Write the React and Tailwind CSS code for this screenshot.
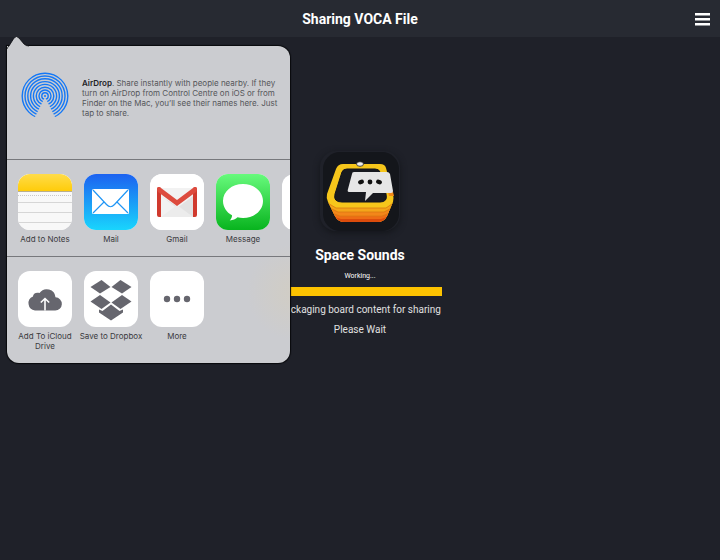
function AirDropIcon() {
  return (
    <svg className="h-12 w-12 shrink-0" viewBox="0 0 48 48" fill="none" aria-hidden="true">
      <clipPath id="airdrop-wedge">
        <path d="M0 0H48V48H35L24 26L13 48H0Z" />
      </clipPath>
      <g stroke="#1478f6" strokeWidth="1.4" clipPath="url(#airdrop-wedge)">
        {[3.2, 6, 8.8, 11.6, 14.4, 17.2, 20, 22.8].map((radius) => (
          <circle key={radius} cx="24" cy="25" r={radius} />
        ))}
      </g>
      <circle cx="24" cy="25" r="1" fill="#1478f6" />
    </svg>
  );
}

function NotesIcon() {
  return (
    <svg className="h-full w-full" viewBox="0 0 54 56" aria-hidden="true">
      <defs>
        <linearGradient id="notes-top" x2="0" y2="1">
          <stop stopColor="#ffdc4a" />
          <stop offset="1" stopColor="#ffcc0a" />
        </linearGradient>
      </defs>
      <rect width="54" height="56" fill="#f8f8f8" />
      <rect width="54" height="17" fill="url(#notes-top)" />
      <path d="M0 17.5H54" stroke="#b9ae8c" />
      <path d="M0 21.5H54" stroke="#c8c8c8" strokeDasharray="1 1" />
      <path d="M0 28.5H54M0 38.5H54M0 48.5H54" stroke="#d6d6d6" />
    </svg>
  );
}

function MailIcon() {
  return (
    <svg className="h-full w-full" viewBox="0 0 54 56" aria-hidden="true">
      <defs>
        <linearGradient id="mail-sky" x2="0" y2="1">
          <stop stopColor="#1d62f0" />
          <stop offset="1" stopColor="#19d5fd" />
        </linearGradient>
      </defs>
      <rect width="54" height="56" fill="url(#mail-sky)" />
      <rect x="8" y="15" width="37" height="25" rx="1.5" fill="#fff" />
      <g fill="none" stroke="#2196f5" strokeWidth="1.2">
        <path d="M9 16L22.500 30.500Q26.500 35 30.500 30.500L44 16" />
        <path d="M9 39L20 28M44 39L33 28" />
      </g>
    </svg>
  );
}

function GmailIcon() {
  return (
    <svg className="h-full w-full" viewBox="0 0 54 56" aria-hidden="true">
      <rect width="54" height="56" fill="#fff" />
      <path d="M8 14H46V43H8Z" fill="#f2f2f2" />
      <path d="M11 22L27 34L43 22V43Z" fill="#e2e2e2" />
      <path d="M11 43L27 31L43 43Z" fill="#ececec" />
      <path d="M7 15Q7 13 9 13L11 14V43H9Q7 43 7 41ZM47 15Q47 13 45 13L43 14V43H45Q47 43 47 41Z" fill="#d03a2e" />
      <path d="M7 15Q7 13 9 13Q10 13 11 14L27 26L43 14Q44 13 45 13Q47 13 47 15Q47 17 46 18L27 32L8 18Q7 17 7 15Z" fill="#dd4b3e" />
    </svg>
  );
}

function MessageIcon() {
  return (
    <svg className="h-full w-full" viewBox="0 0 54 56" aria-hidden="true">
      <defs>
        <linearGradient id="message-green" x2="0" y2="1">
          <stop stopColor="#67fa7c" />
          <stop offset="1" stopColor="#08b41e" />
        </linearGradient>
      </defs>
      <rect width="54" height="56" fill="url(#message-green)" />
      <path
        d="M27 10C15.800 10 7 17.400 7 27C7 33 10.500 38.300 16 41.300C16.200 43.500 15 45 13.800 46.500C17 46.300 19.700 45 21.500 43.300C23.200 43.700 25 44 27 44C38.200 44 47 36.600 47 27C47 17.400 38.200 10 27 10Z"
        fill="#fff"
      />
    </svg>
  );
}

function CloudIcon() {
  return (
    <svg className="h-full w-full" viewBox="0 0 54 56" aria-hidden="true">
      <path
        d="M17 39.500A7.300 7.300 0 0 1 15 25.500C15 22.500 18 21 21.500 22A8.800 8.800 0 0 1 37.500 26.300A6.600 6.600 0 0 1 37 39.500Z"
        fill="#66666e"
      />
      <path d="M27 39.500V28M22.800 31.500L27 27.500L31.200 31.500" fill="none" stroke="#fff" strokeWidth="1.6" />
    </svg>
  );
}

function DropboxIcon() {
  return (
    <svg className="h-full w-full" viewBox="0 0 54 56" fill="#66666e" aria-hidden="true">
      <path d="M17.500 9L26.500 16L16 22.500L6.500 16Z" />
      <path d="M36.500 9L47.500 16L38 22.500L27.500 16Z" />
      <path d="M16 24L26.500 31.500L17.500 38L6.500 30.500Z" />
      <path d="M38 24L47.500 30.500L36.500 38L27.500 31.500Z" />
      <path d="M27 33.500L35.500 40L39 38.500V41.500L27 49.500L15 41.500V38.500L18.500 40Z" />
    </svg>
  );
}

function MoreIcon() {
  return (
    <svg className="h-full w-full" viewBox="0 0 54 56" fill="#66666e" aria-hidden="true">
      <circle cx="17" cy="28" r="3.2" />
      <circle cx="27" cy="28" r="3.2" />
      <circle cx="37" cy="28" r="3.2" />
    </svg>
  );
}

function SpaceSoundsLogo() {
  return (
    <svg className="h-20 w-20" viewBox="0 0 80 80" aria-hidden="true">
      <clipPath id="logo-body">
        <path d="M23 13H60Q65 13 66 17L73 43Q74 47 73 51L67 65Q64 71 57 71H25Q18 71 15 65L8 51Q6 47 7 43L16 18Q18 13 23 13Z" />
      </clipPath>
      <rect x="3" y="1" width="76" height="79" rx="17" fill="#14161b" />
      <g clipPath="url(#logo-body)">
        <rect width="80" height="80" fill="#f6c61b" />
        <path d="M0 47L16 57H66L80 47V80H0Z" fill="#f4a51a" />
        <path d="M0 52L18 61H64L80 52V80H0Z" fill="#f3861a" />
        <path d="M0 58L20 65H62L80 58V80H0Z" fill="#ee6c15" />
        <path d="M0 62L21 68H61L80 62V80H0Z" fill="#dc4c0c" />
        <path
          d="M6 51L16 57H66L75 51M10 57L18 61H64L72 57M12 62L20 65H62L70 62"
          fill="none"
          stroke="#d97812"
          strokeWidth="0.8"
        />
      </g>
      <path
        d="M27 18H55Q59 18 60 21L66 43Q68 51 60 51H22Q13 51 15 43L22 21Q23 18 27 18Z"
        fill="#181a20"
        stroke="#10131d"
      />
      <path d="M68 41H73L74 45H69Z" fill="#f58a18" />
      <ellipse cx="40" cy="13" rx="3.500" ry="2.300" fill="#ededed" stroke="#222" strokeWidth="0.8" />
      <path
        d="M34 21H67Q69 21 70 23L73 40Q73 42 71 42H53L45 50L46 41H29Q27 41 28 38L32 23Q32 21 34 21Z"
        fill="#e6e6e6"
      />
      <g fill="#111">
        <ellipse cx="41" cy="31" rx="3" ry="2.200" transform="rotate(-20 41 31)" />
        <circle cx="50" cy="31" r="2.400" />
        <ellipse cx="59" cy="31" rx="3" ry="2.200" transform="rotate(20 59 31)" />
      </g>
    </svg>
  );
}

const apps = [
  { label: 'Add to Notes', icon: NotesIcon },
  { label: 'Mail', icon: MailIcon },
  { label: 'Gmail', icon: GmailIcon },
  { label: 'Message', icon: MessageIcon },
  { label: '', icon: null }
];

const actions = [
  { label: 'Add To iCloud Drive', icon: CloudIcon },
  { label: 'Save to Dropbox', icon: DropboxIcon },
  { label: 'More', icon: MoreIcon }
];

function ShareItem({ label, icon: Icon }) {
  return (
    <button className="flex w-[66px] shrink-0 flex-col items-center" type="button" aria-label={label || 'Next app'}>
      <span className="block h-14 w-[54px] overflow-hidden rounded-xl bg-white">{Icon && <Icon />}</span>
      <span className="mt-1 text-center text-[8px] leading-[10px] text-[#3a3a3e]">{label}</span>
    </button>
  );
}

function SharePopover() {
  return (
    <section
      className="absolute top-[46px] left-[7px] w-[283px] font-[Inter,sans-serif]"
      aria-label="Share"
    >
      <div className="overflow-hidden rounded-xl rounded-tl-none bg-[#cbccd0] bg-[radial-gradient(circle_at_288px_246px,#d1cdc4,#cbccd0_48px)] shadow-[0_0_1px_1px_#08090c]">
        <div className="flex h-[114px] items-start gap-[13px] border-b border-[#77787c] px-[14px] pt-[25px]">
          <AirDropIcon />
          <p className="mt-[7px] -mr-2 text-[8px] leading-[10px] text-[#55565a]">
            <strong className="font-semibold text-[#222226]">AirDrop</strong>. Share instantly with people nearby. If they
            turn on AirDrop from Control Centre on iOS or from Finder on the Mac, you’ll see their names here. Just tap to
            share.
          </p>
        </div>
        <div className="flex h-[97px] items-start overflow-hidden border-b border-[#77787c] pt-[14px] pl-[5px]">
          {apps.map((app, index) => (
            <ShareItem key={index} label={app.label} icon={app.icon} />
          ))}
        </div>
        <div className="flex items-start pt-[14px] pb-3 pl-[5px]">
          {actions.map((action) => (
            <ShareItem key={action.label} label={action.label} icon={action.icon} />
          ))}
        </div>
      </div>
      <svg className="absolute -top-[10px] left-0 h-5 w-6" viewBox="0 0 24 20" aria-hidden="true">
        <path
          d="M0 20V14Q0 12 2 10L7 2Q9.500 -1 12 2L17 8Q19 10 22 10H24V20Z"
          fill="#cbccd0"
        />
        <path d="M0 13Q0 12 2 10L7 2Q9.500 -1 12 2L17 8Q19 10 22 10" fill="none" stroke="#08090c" strokeWidth="0.8" />
      </svg>
    </section>
  );
}

export default function App() {
  return (
    <div className="relative min-h-screen bg-[#1f2129] font-[Roboto,sans-serif] text-[#e0e0e0]">
      <header className="grid h-[37px] grid-cols-[1fr_auto_1fr] items-center bg-[#272a32] px-[10px]">
        <h1 className="col-start-2 text-sm font-bold text-white">Sharing VOCA File</h1>
        <button className="justify-self-end" type="button" aria-label="Menu">
          <svg className="h-4 w-[15px]" viewBox="0 0 15 16" fill="#fff" aria-hidden="true">
            <path d="M0 2H15V4.500H0ZM0 7H15V9.500H0ZM0 12H15V14.500H0Z" />
          </svg>
        </button>
      </header>

      <main className="flex flex-col items-center pt-[114px] text-center">
        <div className="rounded-2xl shadow-[0_2px_6px_#14161b]">
          <SpaceSoundsLogo />
        </div>
        <h2 className="mt-3 text-sm leading-6 font-bold text-white">Space Sounds</h2>
        <p className="mt-1 text-[7px] leading-[10px] text-white">Working...</p>
        <div className="mt-[6px] h-[9px] w-[164px] bg-[#fdc300]" role="progressbar" aria-label="Packaging progress" />
        <p className="mt-2 text-[10px] leading-3">Packaging board content for sharing</p>
        <p className="mt-2 text-[10px] leading-3">Please Wait</p>
      </main>

      <SharePopover />
    </div>
  );
}
